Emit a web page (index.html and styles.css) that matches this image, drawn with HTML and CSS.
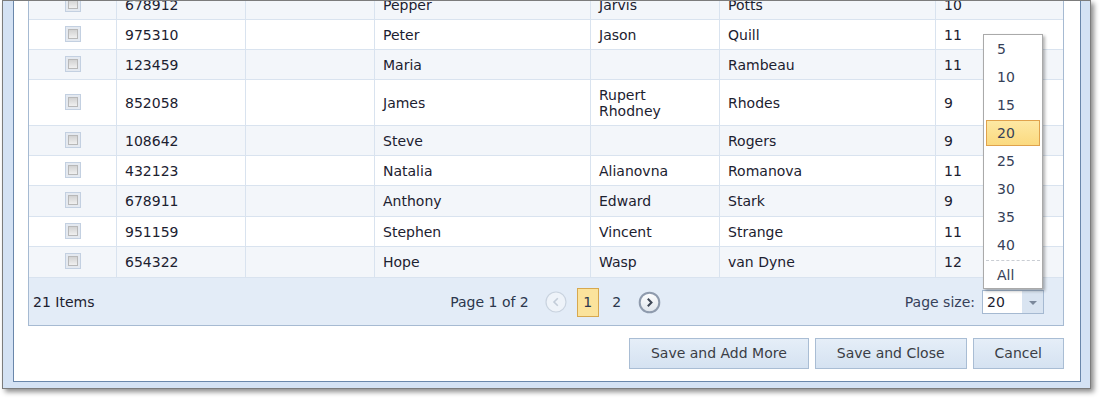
FILE: index.html
```html
<!DOCTYPE html>
<html>
<head>
<meta charset="utf-8">
<title>Grid dialog</title>
<link rel="stylesheet" href="styles.css">
</head>
<body>
<div class="window">
  <div class="dialog">
    <div class="grid">
      <div class="rows">
        <div class="row alt"><div class="cell c-check"><span class="cb"><span class="cb-in"></span></span></div><div class="cell">678912</div><div class="cell"></div><div class="cell">Pepper</div><div class="cell">Jarvis</div><div class="cell">Potts</div><div class="cell">10</div></div>
        <div class="row"><div class="cell c-check"><span class="cb"><span class="cb-in"></span></span></div><div class="cell">975310</div><div class="cell"></div><div class="cell">Peter</div><div class="cell">Jason</div><div class="cell">Quill</div><div class="cell">11</div></div>
        <div class="row alt"><div class="cell c-check"><span class="cb"><span class="cb-in"></span></span></div><div class="cell">123459</div><div class="cell"></div><div class="cell">Maria</div><div class="cell"></div><div class="cell">Rambeau</div><div class="cell">11</div></div>
        <div class="row"><div class="cell c-check"><span class="cb"><span class="cb-in"></span></span></div><div class="cell">852058</div><div class="cell"></div><div class="cell">James</div><div class="cell"><span>Rupert<br>Rhodney</span></div><div class="cell">Rhodes</div><div class="cell">9</div></div>
        <div class="row alt"><div class="cell c-check"><span class="cb"><span class="cb-in"></span></span></div><div class="cell">108642</div><div class="cell"></div><div class="cell">Steve</div><div class="cell"></div><div class="cell">Rogers</div><div class="cell">9</div></div>
        <div class="row"><div class="cell c-check"><span class="cb"><span class="cb-in"></span></span></div><div class="cell">432123</div><div class="cell"></div><div class="cell">Natalia</div><div class="cell">Alianovna</div><div class="cell">Romanova</div><div class="cell">11</div></div>
        <div class="row alt"><div class="cell c-check"><span class="cb"><span class="cb-in"></span></span></div><div class="cell">678911</div><div class="cell"></div><div class="cell">Anthony</div><div class="cell">Edward</div><div class="cell">Stark</div><div class="cell">9</div></div>
        <div class="row"><div class="cell c-check"><span class="cb"><span class="cb-in"></span></span></div><div class="cell">951159</div><div class="cell"></div><div class="cell">Stephen</div><div class="cell">Vincent</div><div class="cell">Strange</div><div class="cell">11</div></div>
        <div class="row alt"><div class="cell c-check"><span class="cb"><span class="cb-in"></span></span></div><div class="cell">654322</div><div class="cell"></div><div class="cell">Hope</div><div class="cell">Wasp</div><div class="cell">van Dyne</div><div class="cell">12</div></div>
      </div>
      <div class="pager">
        <div class="pg-count">21 Items</div>
        <div class="pg-nav">
          <span class="pg-info">Page 1 of 2</span>
          <svg class="pg-prev" width="22" height="22" viewBox="0 0 22 22"><circle cx="11" cy="11" r="10" fill="#eef3f9" stroke="#c9d3df" stroke-width="1.2"/><path d="M12.8 7.2 L9 11 L12.8 14.8" fill="none" stroke="#c2ccd8" stroke-width="1.6"/></svg>
          <span class="pg-cur">1</span>
          <span class="pg-num">2</span>
          <svg class="pg-next" width="23" height="23" viewBox="0 0 23 23"><defs><linearGradient id="ng" x1="0" y1="0" x2="0" y2="1"><stop offset="0" stop-color="#ffffff"/><stop offset="1" stop-color="#dfe5ec"/></linearGradient></defs><circle cx="11.5" cy="11.5" r="9.8" fill="url(#ng)" stroke="#8f9bad" stroke-width="2"/><path d="M9.8 7.8 L13.5 11.5 L9.8 15.2" fill="none" stroke="#3e4655" stroke-width="2"/></svg>
        </div>
        <div class="pagesize">
          <span>Page size:</span>
          <div class="combo">
            <span class="combo-val">20</span>
            <span class="combo-btn"><span class="tri"></span></span>
            <div class="dd">
              <div class="dd-item">5</div>
              <div class="dd-item">10</div>
              <div class="dd-item">15</div>
              <div class="dd-item sel">20</div>
              <div class="dd-item">25</div>
              <div class="dd-item">30</div>
              <div class="dd-item">35</div>
              <div class="dd-item">40</div>
              <div class="dd-sep"></div>
              <div class="dd-item last">All</div>
            </div>
          </div>
        </div>
      </div>
    </div>
    <div class="actions">
      <button class="btn" type="button">Save and Add More</button>
      <button class="btn" type="button">Save and Close</button>
      <button class="btn" type="button">Cancel</button>
    </div>
  </div>
</div>
</body>
</html>
```
FILE: styles.css
```css
* { box-sizing: border-box; }
html, body { margin: 0; padding: 0; }
body {
  width: 1104px;
  height: 402px;
  overflow: hidden;
  background: #ffffff;
  font-family: "DejaVu Sans", Verdana, sans-serif;
  font-size: 14px;
  color: #1c2130;
}
.window {
  margin-left: 2px;
  width: 1089px;
  border: 1px solid #7c7c7c;
  padding: 0 9px 6px 10px;
  background: #d4e2f4;
  box-shadow: 3px 3px 5px rgba(0, 0, 0, 0.45);
  overflow: hidden;
}
.dialog {
  background: #ffffff;
  border: 1px solid #6a87ab;
  border-top: 0;
  padding: 0 16px 12px 14px;
}
.grid {
  display: flex;
  flex-direction: column;
  border: 1px solid #a6bad2;
  border-top: 0;
}
.rows { margin-top: -11px; }
.row {
  display: grid;
  grid-template-columns: 88px 129px 129px 216px 129px 216px 127px;
  border-bottom: 1px solid #d9e3ef;
  background: #ffffff;
}
.row.alt { background: #f3f6fa; }
.cell {
  display: flex;
  align-items: center;
  height: 100%;
  padding: 7px 8px 6px;
  line-height: 16px;
  border-right: 1px solid #d9e3ef;
  min-width: 0;
  white-space: nowrap;
}
.row:nth-child(n+7) .cell { padding-bottom: 6.5px; }
.cell:last-child { border-right: 0; }
.c-check { justify-content: center; padding-top: 6px; padding-bottom: 7px; }
.row:nth-child(n+7) .c-check { padding-bottom: 7.5px; }
.cb {
  width: 16px;
  height: 16px;
  border: 1px solid #c3d0e1;
  background: #e4e9f0;
  display: flex;
  align-items: center;
  justify-content: center;
}
.cb-in {
  width: 10px;
  height: 10px;
  border: 1px solid #b8b8b8;
  background: linear-gradient(#d2d2d2, #f0f0f0);
}
.pager {
  display: grid;
  grid-template-columns: 1fr auto 1fr;
  align-items: center;
  height: 47px;
  padding: 2px 19px 0 4px;
  background: #e3ecf7;
  color: #2c374d;
}
.pg-count { color: #1c2130; }
.pg-nav {
  display: flex;
  align-items: center;
  margin-left: 34px;
}
.pg-info { margin-right: 16px; }
.pg-prev { margin-right: 10px; display: block; }
.pg-cur {
  width: 22px;
  height: 29px;
  border: 1px solid #d7a84f;
  background: #fbe39c;
  display: flex;
  align-items: center;
  justify-content: center;
}
.pg-num {
  width: 22px;
  margin-left: 7px;
  text-align: center;
}
.pg-next { margin-left: 10px; display: block; }
.pagesize {
  justify-self: end;
  display: flex;
  align-items: center;
  gap: 7px;
  color: #36415a;
}
.combo {
  position: relative;
  width: 62px;
  height: 24px;
  border: 1px solid #a5b9d1;
  background: #ffffff;
  display: flex;
}
.combo-val {
  flex: 1;
  padding-left: 4px;
  line-height: 22px;
  color: #1c2130;
}
.combo-btn {
  width: 21px;
  background: #d9e4f1;
  display: flex;
  align-items: center;
  justify-content: center;
}
.tri {
  width: 0;
  height: 0;
  border-left: 4px solid transparent;
  border-right: 4px solid transparent;
  border-top: 4px solid #7b889b;
  margin-top: 2px;
}
.dd {
  position: absolute;
  left: 0;
  bottom: calc(100% + 2px);
  width: 60px;
  border: 1px solid #aaaaaa;
  background: #ffffff;
  padding: 1px 2px 0;
  box-shadow: 2px 2px 3px rgba(0, 0, 0, 0.3);
  z-index: 5;
}
.dd-item {
  height: 26px;
  margin-bottom: 2px;
  padding-left: 10px;
  border: 1px solid transparent;
  line-height: 25px;
  color: #364158;
}
.dd-item.sel {
  background: linear-gradient(#fde8a4, #fbda80);
  border-color: #e0a24c;
}
.dd-item.last { margin-bottom: 0; }
.dd-sep {
  height: 0;
  border-top: 1px dashed #c9cdd3;
  margin-bottom: 1px;
}
.actions {
  display: flex;
  justify-content: flex-end;
  gap: 6px;
  margin-top: 12px;
}
.btn {
  font: inherit;
  height: 31px;
  padding: 0 21px;
  border: 1px solid #a9bdd4;
  border-radius: 0;
  background: linear-gradient(#e5eef8, #d5e2f1);
  color: #3a3d45;
  cursor: pointer;
}
```
